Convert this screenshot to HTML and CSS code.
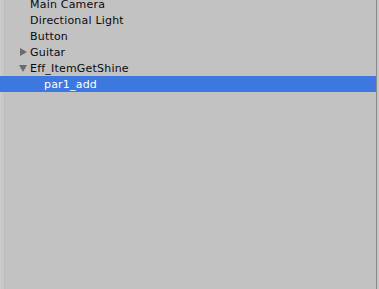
FILE: index.html
```html
<!DOCTYPE html>
<html lang="en">
<head>
  <meta charset="UTF-8">
  <title>Hierarchy</title>
  <link rel="stylesheet" href="styles.css">
</head>
<body>
  <div class="panel">
    <div class="edge"></div>
    <ul class="tree">
      <li class="row"><span class="arrow"></span>Main Camera</li>
      <li class="row"><span class="arrow"></span>Directional Light</li>
      <li class="row"><span class="arrow"></span>Button</li>
      <li class="row"><span class="arrow closed"></span>Guitar</li>
      <li class="row"><span class="arrow open"></span>Eff_ItemGetShine</li>
      <li class="row child selected"><span class="arrow"></span>par1_add</li>
    </ul>
    <div class="scroll"></div>
  </div>
</body>
</html>
```

FILE: styles.css
```css
html, body {
  margin: 0;
  height: 100%;
  overflow: hidden;
}
body {
  background-color: #c2c2c2;
  font-family: 'DejaVu Sans', Verdana, sans-serif;
  font-size: 11px;
  letter-spacing: 0.2px;
  color: #0a0a0a;
}
.panel {
  display: flex;
  height: 100%;
}
.edge {
  width: 5px;
  flex: none;
  background-color: #c8c8c8;
  border-left: 1px solid #cdcdcd;
  border-right: 1px solid #bcbcbc;
  box-sizing: border-box;
}
.tree {
  list-style: none;
  margin: -4px 0 0 -5px;
  padding: 0;
  flex: 1;
}
.row {
  height: 16px;
  box-sizing: border-box;
  padding-top: 2px;
  line-height: 14px;
  display: flex;
  align-items: center;
  padding-left: 19px;
  white-space: nowrap;
}
.row.child {
  padding-left: 33px;
}
.row.selected {
  background-color: #3d78e0;
  color: #fff;
}
.arrow {
  width: 11px;
  height: 14px;
  position: relative;
  flex: none;
}
.arrow.closed::before {
  content: '';
  position: absolute;
  left: 1px;
  top: 2px;
  border-left: 7px solid #6b6b6b;
  border-top: 4px solid transparent;
  border-bottom: 4px solid transparent;
}
.arrow.open::before {
  content: '';
  position: absolute;
  left: 0;
  top: 3px;
  border-top: 7px solid #6b6b6b;
  border-left: 4px solid transparent;
  border-right: 4px solid transparent;
}
.scroll {
  width: 3px;
  flex: none;
  background-color: #c6c6c6;
  border-left: 1px solid #8c8c8c;
  box-sizing: border-box;
  margin-left: -1px;
}
```
